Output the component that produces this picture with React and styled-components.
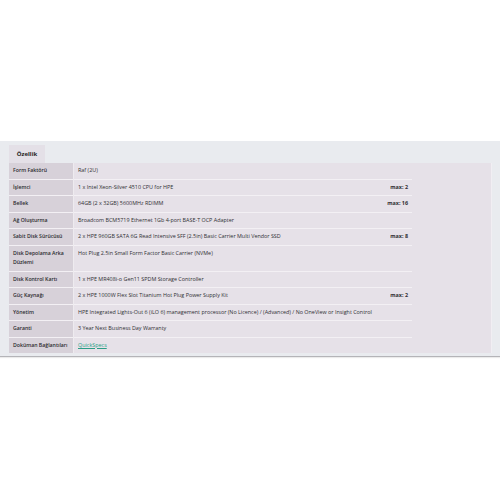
import styled, { createGlobalStyle } from "styled-components";

const GlobalStyle = createGlobalStyle`
  html, body {
    margin: 0;
    padding: 0;
    background: #ffffff;
  }
  body {
    font-family: "Open Sans", "Liberation Sans", sans-serif;
    color: #2f2f33;
  }
`;

const Page = styled.div`
  width: 500px;
  height: 500px;
  padding-top: 141px;
  box-sizing: border-box;
`;

const Panel = styled.div`
  background: #e9ebef;
  padding: 3px 9px 3px 9px;
  border-bottom: 1px solid #b4b4b8;
  box-shadow: 0 1px 1px rgba(0, 0, 0, 0.08);
`;

const Tabs = styled.div`
  display: flex;
  margin-top: 1px;
`;

const Tab = styled.div`
  width: 36px;
  height: 18px;
  background: #e4e0e7;
  font-size: 6px;
  font-weight: 700;
  display: flex;
  align-items: center;
  justify-content: center;
  color: #222;
`;

const Sheet = styled.div`
  width: 482px;
  background: #e6e1e8;
  box-shadow: 1px 0 0 #f1eef3;
`;

const SpecTable = styled.table`
  width: 403px;
  border-collapse: collapse;
  font-size: 5.4px;
  line-height: 9.5px;
`;

const Row = styled.tr`
  border-bottom: 1px solid #f3f0f4;
  &:last-child {
    border-bottom: none;
  }
`;

const Label = styled.td`
  width: 56px;
  background: #d7d1d9;
  padding: 3px 4px;
  font-size: 5.2px;
  font-weight: 600;
  vertical-align: top;
  border-right: 1px solid #eeebef;
  color: #2a2a2e;
`;

const Value = styled.td`
  padding: 3px 4px;
  vertical-align: top;
  white-space: nowrap;
`;

const Max = styled.td`
  width: 28px;
  padding: 3px 4px;
  text-align: right;
  font-weight: 700;
  vertical-align: top;
  white-space: nowrap;
`;

const Link = styled.a`
  color: #2b9e86;
  text-decoration: underline;
`;

const specs = [
  { label: "Form Faktörü", value: "Raf (2U)" },
  { label: "İşlemci", value: "1 x Intel Xeon-Silver 4510 CPU for HPE", max: "max: 2" },
  { label: "Bellek", value: "64GB (2 x 32GB) 5600MHz RDIMM", max: "max: 16" },
  { label: "Ağ Oluşturma", value: "Broadcom BCM5719 Ethernet 1Gb 4-port BASE-T OCP Adapter" },
  {
    label: "Sabit Disk Sürücüsü",
    value: "2 x HPE 960GB SATA 6G Read Intensive SFF (2.5in) Basic Carrier Multi Vendor SSD",
    max: "max: 8",
  },
  { label: "Disk Depolama Arka Düzlemi", value: "Hot Plug 2.5in Small Form Factor Basic Carrier (NVMe)" },
  { label: "Disk Kontrol Kartı", value: "1 x HPE MR408i-o Gen11 SPDM Storage Controller" },
  {
    label: "Güç Kaynağı",
    value: "2 x HPE 1000W Flex Slot Titanium Hot Plug Power Supply Kit",
    max: "max: 2",
  },
  {
    label: "Yönetim",
    value:
      "HPE Integrated Lights-Out 6 (iLO 6) management processor (No Licence) / (Advanced) / No OneView or Insight Control",
  },
  { label: "Garanti", value: "3 Year Next Business Day Warranty" },
  { label: "Doküman Bağlantıları", link: "QuickSpecs" },
];

export default function App() {
  return (
    <Page>
      <GlobalStyle />
      <Panel>
        <Tabs>
          <Tab>Özellik</Tab>
        </Tabs>
        <Sheet>
          <SpecTable>
            <tbody>
              {specs.map((spec, index) => (
                <Row key={index}>
                  <Label>{spec.label}</Label>
                  <Value>
                    {spec.link ? <Link href="#">{spec.link}</Link> : spec.value}
                  </Value>
                  <Max>{spec.max}</Max>
                </Row>
              ))}
            </tbody>
          </SpecTable>
        </Sheet>
      </Panel>
    </Page>
  );
}
